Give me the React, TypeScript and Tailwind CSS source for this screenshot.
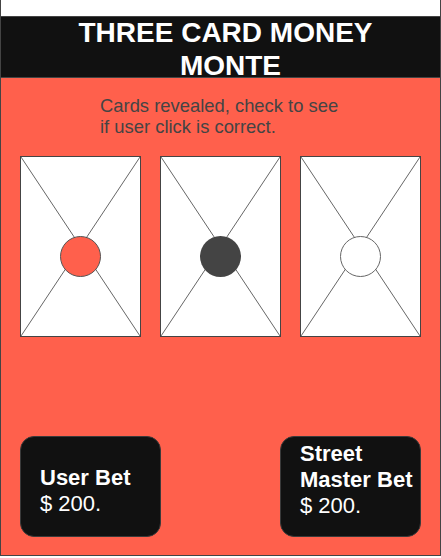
import React from 'react';

const cards = [
  { id: 1, dot: 'bg-[#ff604c] border border-[#555]' },
  { id: 2, dot: 'bg-[#444444]' },
  { id: 3, dot: 'bg-white border border-[#666]' },
];

function Card({ dot }: { dot: string }) {
  return (
    <div className="relative w-[121px] h-[181px] border border-[#444] bg-white">
      {/* crossed placeholder lines */}
      <svg className="absolute inset-0 w-full h-full" viewBox="0 0 119 179" preserveAspectRatio="none">
        <line x1="0" y1="0" x2="119" y2="179" stroke="#666" strokeWidth="1" />
        <line x1="119" y1="0" x2="0" y2="179" stroke="#666" strokeWidth="1" />
      </svg>
      <div className={`absolute left-[39px] top-[79px] w-[41px] h-[41px] rounded-full ${dot}`} />
    </div>
  );
}

export default function App() {
  return (
    <div
      className="w-[441px] h-[558px] bg-white"
      style={{ fontFamily: '"Liberation Sans", Arial, sans-serif' }}
    >
      <div className="h-[556px] border-x border-b border-[#444] flex flex-col">
        <div className="h-4 shrink-0" />

        {/* Title bar */}
        <header className="relative z-10 h-[62px] shrink-0 bg-[#111] border-y border-[#444] text-white font-bold text-[28px] leading-[33px] text-center">
          <div className="pl-[10px] -mt-px">THREE CARD MONEY</div>
          <div className="pl-[20px]">MONTE</div>
        </header>

        <main className="flex-1 bg-[#ff604c] flex flex-col">
          <p className="mt-[17px] pl-[99px] text-[18.4px] leading-[21px] text-[#444]">
            Cards revealed, check to see
            <br />
            if user click is correct.
          </p>

          <div className="mt-[19px] flex gap-[19px] px-[19px]">
            {cards.map((c) => (
              <Card key={c.id} dot={c.dot} />
            ))}
          </div>

          <div className="mt-[99px] flex justify-between px-[19px]">
            <div className="w-[141px] h-[101px] rounded-[14px] bg-[#111] border border-[#3a3a3a] text-white text-[22px] leading-[26px] pl-[19px] pt-[28px]">
              <div className="font-bold">User Bet</div>
              <div>$ 200.</div>
            </div>
            <div className="w-[141px] h-[101px] rounded-[14px] bg-[#111] border border-[#3a3a3a] text-white text-[22px] leading-[26px] pl-[19px] pt-[4px]">
              <div className="font-bold">Street</div>
              <div className="font-bold whitespace-nowrap">Master Bet</div>
              <div>$ 200.</div>
            </div>
          </div>
        </main>
      </div>
    </div>
  );
}
